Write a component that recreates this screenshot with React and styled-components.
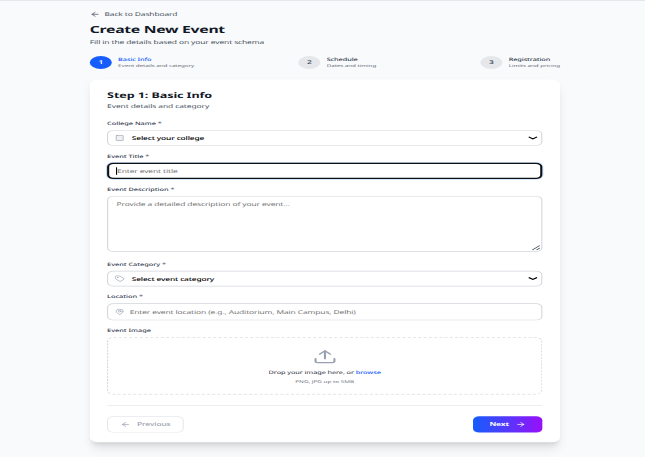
import React from 'react';
import styled, { createGlobalStyle } from 'styled-components';
import { ArrowLeft, ArrowRight, Building, Tag, MapPin, Upload } from 'lucide-react';

const GlobalStyle = createGlobalStyle`
  * { box-sizing: border-box; }
  html, body { margin: 0; width: 645px; height: 457px; overflow: hidden; background: #f9fafb; }
`;

const Viewport = styled.div`
  width: 645px;
  height: 457px;
  overflow: hidden;
`;

const Page = styled.main`
  width: 1229px;
  height: 1404px;
  padding: 29px 0 0 171px;
  border-top: 3px solid #e5e7eb;
  background: #f9fafb;
  color: #111827;
  font: 400 16px/24px 'Noto Sans', 'Open Sans', sans-serif;
  text-rendering: geometricPrecision;
  transform: scale(0.525, 0.3255);
  transform-origin: 0 0;
`;

const Container = styled.div`
  width: 896px;
`;

const Text = styled.span`
  white-space: nowrap;
  letter-spacing: ${(p) => p.$track ?? -0.2}px;
`;

const BackLink = styled.div`
  display: flex;
  align-items: center;
  gap: 8px;
  margin-bottom: 16px;
  color: #4b5563;
`;

const Title = styled.h1`
  margin: 0 0 8px;
  font-size: 30px;
  line-height: 36px;
  font-weight: 700;
  color: #111827;
`;

const Subtitle = styled.p`
  margin: 0 0 32px;
  color: #4b5563;
`;

const Stepper = styled.div`
  display: flex;
  justify-content: space-between;
  margin-bottom: 32px;
`;

const Step = styled.div`
  display: flex;
  align-items: center;
  gap: 12px;
  height: 40px;
`;

const StepNumber = styled.div`
  display: flex;
  align-items: center;
  justify-content: center;
  width: 42px;
  height: 40px;
  border-radius: 50%;
  font-weight: 600;
  background: ${(p) => (p.$active ? '#155dfc' : '#e5e7eb')};
  color: ${(p) => (p.$active ? '#fff' : '#4b5563')};
`;

const StepTitle = styled.div`
  font-size: 14px;
  line-height: 20px;
  font-weight: 500;
  color: ${(p) => (p.$active ? '#155dfc' : '#374151')};
`;

const StepHint = styled.div`
  font-size: 12px;
  line-height: 16px;
  color: #6b7280;
`;

const Card = styled.section`
  height: 1115px;
  padding: 32px 34px 32px 33px;
  border-radius: 16px;
  background: #fff;
  box-shadow: 0 20px 25px -5px rgba(0, 0, 0, 0.1), 0 8px 10px -6px rgba(0, 0, 0, 0.1);
`;

const CardTitle = styled.h2`
  margin: 0 0 6px;
  font-size: 24px;
  line-height: 32px;
  font-weight: 700;
`;

const CardHint = styled.p`
  margin: 0 0 32px;
  color: #4b5563;
`;

const Field = styled.div`
  margin-bottom: ${(p) => p.$gap || 22}px;
`;

const Label = styled.div`
  margin-bottom: 10px;
  font-size: 14px;
  line-height: 20px;
  font-weight: 500;
  color: #364153;
`;

const Control = styled.div`
  display: flex;
  align-items: center;
  height: ${(p) => p.$height || 50}px;
  padding: 0 7px 0 12px;
  border: 2px solid #d1d5db;
  border-radius: 12px;
  color: ${(p) => (p.$filled ? '#000' : '#757575')};
  font-weight: ${(p) => (p.$filled ? 500 : 400)};

  svg { flex: none; }
  > ${Text} { margin-left: ${(p) => (p.$filled ? 13 : 9)}px; }
`;

const FocusedControl = styled(Control)`
  padding-left: 13px;
  border: 4px solid #101010;
  box-shadow: 0 0 0 2px #bedbff;
  > ${Text} { margin-left: 0; }
`;

const Caret = styled.span`
  width: 2px;
  height: 23px;
  background: #000;
`;

const Textarea = styled.div`
  display: flex;
  justify-content: space-between;
  height: 172px;
  padding: 12px 2px 2px 16px;
  border: 2px solid #d1d5db;
  border-radius: 12px;
  color: #757575;
`;

const Resizer = styled.svg`
  align-self: flex-end;
`;

const Chevron = styled.svg`
  margin-left: auto;
`;

const DropZone = styled.div`
  display: flex;
  flex-direction: column;
  align-items: center;
  height: 176px;
  padding-top: 34px;
  border: 2px dashed #d1d5db;
  border-radius: 12px;
  color: #1f2937;
`;

const DropPrompt = styled.div`
  margin-top: 14px;
  font-size: 14px;
  line-height: 20px;
`;

const Browse = styled.span`
  color: #155dfc;
  font-weight: 500;
`;

const DropHint = styled.div`
  margin-top: 11px;
  font-size: 12px;
  line-height: 16px;
  color: #6b7280;
`;

const Footer = styled.footer`
  display: flex;
  justify-content: space-between;
  margin-top: 32px;
  padding-top: 32px;
  border-top: 3px solid #eceef1;
`;

const Button = styled.button`
  display: flex;
  align-items: center;
  justify-content: center;
  gap: 12px;
  height: 50px;
  width: ${(p) => (p.$primary ? 132 : 146)}px;
  border: ${(p) => (p.$primary ? 'none' : '2px solid #e5e7eb')};
  border-radius: 12px;
  background: ${(p) => (p.$primary ? 'linear-gradient(90deg, #155dfc, #9810fa)' : '#fff')};
  color: ${(p) => (p.$primary ? '#fff' : '#9ca3af')};
  font: ${(p) => (p.$primary ? 700 : 500)} 16px/24px 'Noto Sans', sans-serif;
`;

const DownArrow = () => (
  <Chevron width="18" height="12" viewBox="0 0 18 12" fill="none" stroke="#000" strokeWidth="3">
    <path d="M1 2.5l8 6 8-6" />
  </Chevron>
);

const steps = [
  { title: 'Basic Info', hint: 'Event details and category' },
  { title: 'Schedule', hint: 'Dates and timing' },
  { title: 'Registration', hint: 'Limits and pricing' },
];

export default function App() {
  return (
    <Viewport>
      <GlobalStyle />
      <Page>
        <Container>
          <BackLink><ArrowLeft size={20} /><Text>Back to Dashboard</Text></BackLink>
          <Title><Text $track={-0.55}>Create New Event</Text></Title>
          <Subtitle><Text>Fill in the details based on your event schema</Text></Subtitle>
          <Stepper>
            {steps.map((step, i) => (
              <Step key={step.title}>
                <StepNumber $active={i === 0}>{i + 1}</StepNumber>
                <div>
                  <StepTitle $active={i === 0}><Text>{step.title}</Text></StepTitle>
                  <StepHint><Text $track={-0.14}>{step.hint}</Text></StepHint>
                </div>
              </Step>
            ))}
          </Stepper>
          <Card>
            <CardTitle><Text>Step 1: Basic Info</Text></CardTitle>
            <CardHint><Text $track={-0.15}>Event details and category</Text></CardHint>
            <Field>
              <Label><Text $track={-0.05}>College Name *</Text></Label>
              <Control $height={48} $filled>
                <Building size={20} color="#9ca3af" fill="#eef0f3" />
                <Text $track={-0.28}>Select your college</Text>
                <DownArrow />
              </Control>
            </Field>
            <Field>
              <Label><Text $track={-0.05}>Event Title *</Text></Label>
              <FocusedControl><Caret /><Text $track={-0.2}>Enter event title</Text></FocusedControl>
            </Field>
            <Field $gap={28}>
              <Label><Text $track={-0.05}>Event Description *</Text></Label>
              <Textarea>
                <Text>Provide a detailed description of your event...</Text>
                <Resizer width="16" height="18" viewBox="0 0 16 18" stroke="#4b5563" strokeWidth="2">
                  <path d="M1 16L15 2M9 16l6-6" />
                </Resizer>
              </Textarea>
            </Field>
            <Field>
              <Label><Text $track={-0.05}>Event Category *</Text></Label>
              <Control $height={48} $filled>
                <Tag size={20} color="#9ca3af" />
                <Text $track={-0.33}>Select event category</Text>
                <DownArrow />
              </Control>
            </Field>
            <Field>
              <Label><Text $track={-0.05}>Location *</Text></Label>
              <Control $height={52}>
                <MapPin size={20} color="#9ca3af" />
                <Text $track={-0.22}>Enter event location (e.g., Auditorium, Main Campus, Delhi)</Text>
              </Control>
            </Field>
            <Field>
              <Label><Text $track={-0.05}>Event Image</Text></Label>
              <DropZone>
                <Upload size={48} color="#99a1af" />
                <DropPrompt><Text $track={-0.16}>Drop your image here, or <Browse>browse</Browse></Text></DropPrompt>
                <DropHint><Text $track={0}>PNG, JPG up to 5MB</Text></DropHint>
              </DropZone>
            </Field>
            <Footer>
              <Button><ArrowLeft size={20} /><Text>Previous</Text></Button>
              <Button $primary><Text>Next</Text><ArrowRight size={20} /></Button>
            </Footer>
          </Card>
        </Container>
      </Page>
    </Viewport>
  );
}
